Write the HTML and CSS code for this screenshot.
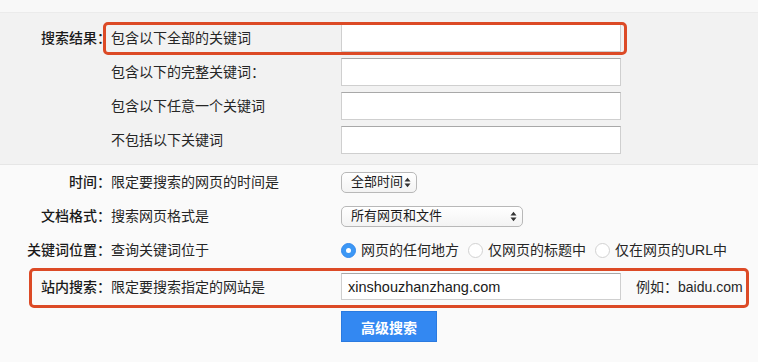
FILE: index.html
```html
<!DOCTYPE html>
<html lang="zh-CN">
<head>
<meta charset="utf-8">
<title>高级搜索</title>
<link rel="stylesheet" href="styles.css">
</head>
<body>
<div class="page">
  <div class="top-strip"></div>
  <div class="panel">
    <div class="row">
      <div class="label">搜索结果：</div>
      <div class="desc">包含以下全部的关键词</div>
      <div class="ctrl"><div class="text-input"></div></div>
    </div>
    <div class="row">
      <div class="label"></div>
      <div class="desc">包含以下的完整关键词：</div>
      <div class="ctrl"><div class="text-input"></div></div>
    </div>
    <div class="row">
      <div class="label"></div>
      <div class="desc">包含以下任意一个关键词</div>
      <div class="ctrl"><div class="text-input"></div></div>
    </div>
    <div class="row">
      <div class="label"></div>
      <div class="desc">不包括以下关键词</div>
      <div class="ctrl"><div class="text-input"></div></div>
    </div>
  </div>
  <div class="lower">
    <div class="row row-lg">
      <div class="label">时间：</div>
      <div class="desc">限定要搜索的网页的时间是</div>
      <div class="ctrl">
        <div class="select select-time"><span>全部时间</span>
          <svg class="arrows" width="7" height="11" viewBox="0 0 7 11"><path d="M0.5 4.5 L3.5 0.8 L6.5 4.5 Z M0.5 6.5 L3.5 10.2 L6.5 6.5 Z" fill="#333"/></svg>
        </div>
      </div>
    </div>
    <div class="row row-lg">
      <div class="label">文档格式：</div>
      <div class="desc">搜索网页格式是</div>
      <div class="ctrl">
        <div class="select select-type"><span>所有网页和文件</span>
          <svg class="arrows" width="7" height="11" viewBox="0 0 7 11"><path d="M0.5 4.5 L3.5 0.8 L6.5 4.5 Z M0.5 6.5 L3.5 10.2 L6.5 6.5 Z" fill="#333"/></svg>
        </div>
      </div>
    </div>
    <div class="row row-lg">
      <div class="label">关键词位置：</div>
      <div class="desc">查询关键词位于</div>
      <div class="ctrl radios">
        <span class="radio-item"><span class="radio checked"></span>网页的任何地方</span>
        <span class="radio-item"><span class="radio"></span>仅网页的标题中</span>
        <span class="radio-item"><span class="radio"></span>仅在网页的URL中</span>
      </div>
    </div>
    <div class="row row-site">
      <div class="label">站内搜索：</div>
      <div class="desc">限定要搜索指定的网站是</div>
      <div class="ctrl site-ctrl">
        <div class="text-input site-input">xinshouzhanzhang.com</div>
        <span class="example">例如：baidu.com</span>
      </div>
    </div>
    <div class="btn-row">
      <button class="btn" type="button">高级搜索</button>
    </div>
  </div>
  <div class="highlight highlight-1"></div>
  <div class="highlight highlight-2"></div>
</div>
</body>
</html>
```
FILE: styles.css
```css
html, body {
  margin: 0;
  padding: 0;
}
body {
  background: #fafafa;
  font-family: "Liberation Sans", "Noto Sans CJK SC", sans-serif;
  font-size: 14px;
  color: #222;
  width: 758px;
  height: 362px;
  overflow: hidden;
}
.page {
  position: relative;
  width: 758px;
  height: 362px;
}
.top-strip {
  height: 12px;
  background: #f8f8f8;
  border-bottom: 1px solid #ebebeb;
}
.panel {
  background: #f2f2f2;
  padding: 11px 0 10px;
  display: flex;
  flex-direction: column;
  gap: 6px;
  border-bottom: 1px solid #e6e6e6;
}
.row {
  display: grid;
  grid-template-columns: 111px 230px 1fr;
  align-items: center;
  height: 28px;
  line-height: 20px;
}
.label {
  text-align: right;
  white-space: nowrap;
  color: #1a1a1a;
  font-weight: 500;
}
.desc {
  white-space: nowrap;
  color: #262626;
}
.ctrl {
  display: flex;
  align-items: center;
}
.text-input {
  box-sizing: border-box;
  width: 280px;
  height: 28px;
  background: #fff;
  border: 1px solid #cfcfcf;
  border-top-color: #a8a8a8;
}
.lower {
  display: flex;
  flex-direction: column;
}
.row-lg {
  height: 34px;
}
.select {
  box-sizing: border-box;
  height: 21px;
  display: flex;
  align-items: center;
  justify-content: space-between;
  padding: 0 5px 0 9px;
  background: linear-gradient(#ffffff, #f3f3f3);
  border: 1px solid #b8b8b8;
  border-radius: 5px;
  font-size: 13px;
  color: #1a1a1a;
  line-height: 18px;
}
.select-time {
  width: 76px;
}
.select-type {
  width: 182px;
}
.arrows {
  display: block;
}
.radios {
  font-size: 14px;
  color: #262626;
}
.radio-item {
  display: inline-flex;
  align-items: center;
  margin-right: 9px;
  white-space: nowrap;
}
.radio {
  box-sizing: border-box;
  width: 15px;
  height: 15px;
  border-radius: 50%;
  border: 1px solid #d2d2d2;
  background: #fff;
  margin: 0 5px 0 0;
  display: inline-block;
  position: relative;
}
.radio.checked {
  background: #3c97f5;
  border-color: #3389ee;
}
.radio.checked::after {
  content: "";
  position: absolute;
  left: 4px;
  top: 4px;
  width: 5px;
  height: 5px;
  border-radius: 50%;
  background: #fff;
}
.row-site {
  height: 39px;
}
.site-ctrl {
  gap: 15px;
}
.site-input {
  height: 27px;
  padding-left: 6px;
  display: flex;
  align-items: center;
  font-size: 14.5px;
  color: #1a1a1a;
}
.example {
  white-space: nowrap;
  color: #262626;
}
.btn-row {
  padding-left: 341px;
  margin-top: 5px;
}
.btn {
  width: 96px;
  height: 31px;
  background: #3388f2;
  border: 1px solid #2a7ae0;
  color: #fff;
  font-family: "Liberation Sans", "Noto Sans CJK SC", sans-serif;
  font-size: 14px;
  font-weight: bold;
  padding: 0;
  border-radius: 0;
}
.highlight {
  position: absolute;
  box-sizing: border-box;
  border: 3px solid #dc4a26;
  border-radius: 5px;
  pointer-events: none;
}
.highlight-1 {
  left: 103px;
  top: 22px;
  width: 524px;
  height: 33px;
}
.highlight-2 {
  left: 29px;
  top: 268px;
  width: 720px;
  height: 40px;
}
```
